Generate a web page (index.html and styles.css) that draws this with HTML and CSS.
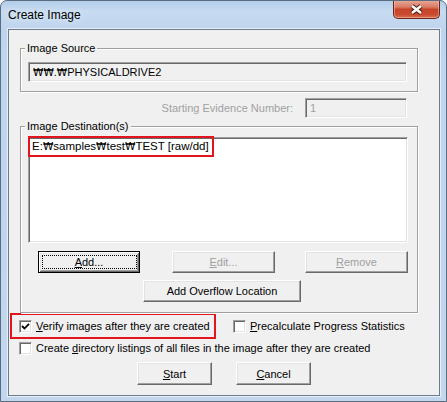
FILE: index.html
```html
<!DOCTYPE html>
<html>
<head>
<meta charset="utf-8">
<link rel="stylesheet" href="styles.css">
</head>
<body>
<div class="window">
  <div class="titlebar">
    <span class="title">Create Image</span>
    <div class="close">
      <svg width="15" height="11" viewBox="0 0 15 11"><path d="M3 2 L12 9 M12 2 L3 9" stroke="#4a1a10" stroke-width="4.6"/><path d="M3 2 L12 9 M12 2 L3 9" stroke="#fff" stroke-width="2.6"/></svg>
    </div>
  </div>
  <div class="client">
    <div class="group g-source">
      <span class="legend">Image Source</span>
      <div class="field src"><span class="won">₩₩</span>.<span class="won">₩</span>PHYSICALDRIVE2</div>
    </div>
    <div class="evidence-row">
      <span class="disabled ev-label">Starting Evidence Number:</span>
      <div class="field evidence">1</div>
    </div>
    <div class="group g-dest">
      <span class="legend">Image Destination(s)</span>
      <div class="listbox"><div class="dest-item">E:<span class="won">₩</span>samples<span class="won">₩</span>test<span class="won">₩</span>TEST [raw/dd]</div></div>
      <div class="btn-row">
        <button class="btn default add"><u>A</u>dd...</button>
        <button class="btn disabled edit"><u>E</u>dit...</button>
        <button class="btn disabled remove"><u>R</u>emove</button>
      </div>
      <button class="btn overflow">Add Overflow Location</button>
    </div>
    <div class="check-row row1">
      <div class="highlight">
        <span class="cb"><svg width="9" height="9" viewBox="0 0 9 9"><path d="M1 4 L3.5 6.5 L8 1.8" fill="none" stroke="#000" stroke-width="1.8"/></svg></span>
        <span class="lbl"><u>V</u>erify images after they are created</span>
      </div>
      <div class="precalc">
        <span class="cb"></span>
        <span class="lbl"><u>P</u>recalculate Progress Statistics</span>
      </div>
    </div>
    <div class="check-row row2">
      <span class="cb"></span>
      <span class="lbl">Create <u>d</u>irectory listings of all files in the image after they are created</span>
    </div>
    <div class="action-row">
      <button class="btn start"><u>S</u>tart</button>
      <button class="btn cancel"><u>C</u>ancel</button>
    </div>
  </div>
</div>
</body>
</html>
```
FILE: styles.css
```css
html, body {
  margin: 0;
  padding: 0;
  background: #fff;
}
body {
  font-family: "Liberation Sans", "DejaVu Sans", sans-serif;
  font-size: 11px;
  color: #000;
}
.won {
  font-family: "DejaVu Sans", "Liberation Sans", sans-serif;
  font-size: 10.5px;
  font-weight: normal;
}
.window {
  width: 447px;
  height: 402px;
  box-sizing: border-box;
  border: 1px solid #5a6c80;
  border-radius: 7px 7px 0 0;
  background: linear-gradient(180deg, #b3cde9 0px, #c7dbf1 10px, #bfd5ee 28px, #c2d7ee 100%);
  overflow: hidden;
}
.titlebar {
  display: flex;
  justify-content: space-between;
  height: 28px;
  padding-left: 7px;
}
.title {
  font-size: 12px;
  line-height: 28px;
  color: #000;
  text-shadow: 0 0 6px rgba(255,255,255,0.8);
}
.close {
  width: 47px;
  height: 19px;
  margin-top: -1px;
  margin-right: 6px;
  box-sizing: border-box;
  border: 1px solid #6b2418;
  border-top: none;
  border-radius: 0 0 5px 5px;
  background: linear-gradient(180deg, #e9ab9d 0%, #d97a63 40%, #c6432a 52%, #c84a2f 80%, #d9704f 100%);
  box-shadow: inset 0 0 0 1px rgba(255, 210, 190, 0.45);
  display: flex;
  align-items: center;
  justify-content: center;
}
.client {
  margin-left: 7px;
  width: 432px;
  height: 367px;
  box-sizing: border-box;
  border: 1px solid #6d7c8c;
  background: #f0f0f0;
  box-shadow: 0 0 0 1px rgba(255,255,255,0.6);
}
.group {
  position: relative;
  width: 398px;
  box-sizing: border-box;
  margin-left: 11px;
  border: 1px solid #a0a0a0;
  box-shadow: inset 1px 1px #fff, 1px 1px #fff;
}
.legend {
  position: absolute;
  top: -7px;
  left: 4px;
  padding: 0 2px;
  background: #f0f0f0;
  line-height: 13px;
}
.g-source {
  margin-top: 18px;
  height: 44px;
  padding: 13px 0 0 7px;
}
.field {
  box-sizing: border-box;
  border: 1px solid;
  border-color: #a0a0a0 #fff #fff #a0a0a0;
  box-shadow: inset 1px 1px #696969, inset -1px -1px #e3e3e3;
}
.src {
  width: 379px;
  height: 20px;
  padding: 0 4px;
  line-height: 18px;
  background: #f0f0f0;
}
.evidence-row {
  display: flex;
  justify-content: flex-end;
  align-items: center;
  width: 398px;
  height: 20px;
  box-sizing: border-box;
  margin: 6px 0 0 11px;
  padding-right: 11px;
}
.disabled {
  color: #a0a0a0;
}
.ev-label {
  margin-right: 12px;
}
.evidence {
  width: 102px;
  height: 20px;
  padding: 0 4px;
  line-height: 18px;
  background: #f0f0f0;
  color: #a0a0a0;
}
.g-dest {
  margin-top: 8px;
  height: 187px;
  padding: 10px 0 0 7px;
}
.listbox {
  width: 380px;
  height: 106px;
  box-sizing: border-box;
  background: #fff;
  border: 1px solid;
  border-color: #a0a0a0 #fff #fff #a0a0a0;
  box-shadow: inset 1px 1px #696969, inset -1px -1px #e3e3e3;
}
.dest-item {
  width: fit-content;
  margin: -2px 0 0 -1px;
  border: 2px solid #e3141c;
  padding: 0 3px 0 2px;
  line-height: 17px;
  font-size: 11.5px;
}
.btn-row {
  display: flex;
  margin-top: 8px;
  height: 22px;
}
.btn {
  height: 22px;
  box-sizing: border-box;
  font: inherit;
  background: #f0f0f0;
  border: 1px solid;
  border-color: #fff #696969 #696969 #fff;
  box-shadow: inset -1px -1px #a0a0a0, inset 1px 1px #e3e3e3;
  padding: 0;
  color: #000;
  text-align: center;
}
.btn.disabled {
  color: #a0a0a0;
}
.btn.default {
  position: relative;
  border-color: #000;
  box-shadow: inset 1px 1px #fff, inset -1px -1px #696969, inset 2px 2px #e3e3e3, inset -2px -2px #a0a0a0;
}
.btn.default::after {
  content: "";
  position: absolute;
  top: 3px;
  left: 3px;
  right: 2px;
  bottom: 3px;
  border: 1px dotted #000;
}
.add {
  width: 102px;
  margin-left: 10px;
}
.edit {
  width: 103px;
  margin-left: 32px;
}
.remove {
  width: 103px;
  margin-left: 30px;
}
.overflow {
  display: block;
  width: 158px;
  margin: 7px 0 0 115px;
}
.check-row {
  display: flex;
  align-items: flex-start;
}
.row1 {
  margin-left: 1px;
}
.highlight {
  display: flex;
  align-items: flex-start;
  width: 206px;
  height: 26px;
  box-sizing: border-box;
  border: 2px solid #e3141c;
  padding: 5px 0 0 7px;
}
.cb {
  flex: none;
  width: 13px;
  height: 13px;
  box-sizing: border-box;
  background: #fff;
  border: 1px solid;
  border-color: #a0a0a0 #fff #fff #a0a0a0;
  box-shadow: inset 1px 1px #696969, inset -1px -1px #e3e3e3;
  display: flex;
  align-items: center;
  justify-content: center;
}
.lbl {
  margin-left: 4px;
  line-height: 13px;
  white-space: nowrap;
}
.precalc {
  display: flex;
  align-items: flex-start;
  margin: 7px 0 0 17px;
}
.row2 {
  margin: 3px 0 0 10px;
}
.action-row {
  display: flex;
  margin-top: 7px;
}
.start {
  width: 75px;
  height: 23px;
  margin-left: 128px;
}
.cancel {
  width: 75px;
  height: 23px;
  margin-left: 24px;
}
```
